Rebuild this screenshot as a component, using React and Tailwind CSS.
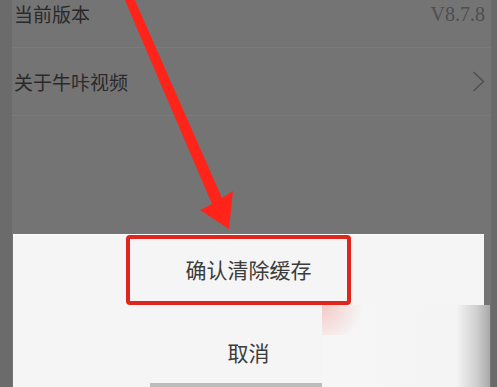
import React from "react";

const cjk = { fontFamily: '"Noto Sans CJK SC", "Noto Sans", sans-serif' };

function Chevron() {
  return (
    <svg width="13" height="21" viewBox="0 0 13 21" fill="none">
      <polyline points="1.5,1 11.5,10.5 1.5,20" stroke="#4c4c4c" strokeWidth="1.3" />
    </svg>
  );
}

function Arrow() {
  // red annotation arrow pointing down at the confirm button
  return (
    <svg
      className="absolute left-0 top-0 pointer-events-none"
      width="497"
      height="387"
      viewBox="0 0 497 387"
    >
      <polygon
        points="124,-2 134,-2 222,198 233,191 229,229 200,210 212,204"
        fill="#ff2419"
      />
    </svg>
  );
}

export default function App() {
  return (
    <div className="relative w-[497px] h-[387px] overflow-hidden bg-[#747474] flex" style={cjk}>
      <div className="w-[12px] bg-[#6b6b6b]" />

      <div className="w-[479px] flex flex-col">
        {/* settings rows, dimmed by the sheet overlay */}
        <div className="h-[48px] pt-[2px] pb-[22px] pl-[2px] pr-[6px] flex items-center justify-between border-b border-[#7b7b7b]">
          <span className="text-[19px] leading-none text-[#2a2a2a]">当前版本</span>
          <span
            className="text-[20px] leading-none text-[#4e4e4e]"
            style={{ fontFamily: '"Liberation Serif", "DejaVu Serif", serif' }}
          >
            V8.7.8
          </span>
        </div>
        <div className="h-[68px] pl-[2px] pr-[6px] flex items-center justify-between border-b border-[#7b7b7b]">
          <span className="text-[19px] leading-none text-[#2a2a2a]">关于牛咔视频</span>
          <Chevron />
        </div>

        <div className="flex-1" />

        {/* bottom sheet */}
        <div className="ml-[1px] mr-[7px] h-[153px] bg-[#f5f5f5] border-t border-[#fcfcfc] flex flex-col items-center">
          <div className="h-[69px] w-full flex items-center justify-center">
            <span className="text-[21px] leading-none text-[#3c3c3c]">确认清除缓存</span>
          </div>
          <div className="h-[79px] w-full flex justify-center pt-[38px]">
            <span className="text-[21px] leading-none text-[#3c3c3c]">取消</span>
          </div>
          <div className="w-[197px] h-[4px] bg-[#bcbcbc]" />
        </div>
      </div>

      <div className="w-[6px] bg-[#6a6a6a]" />

      {/* red highlight box */}
      <div className="absolute left-[126px] top-[235px] w-[225px] h-[70px] border-[4px] border-[#e0251c] rounded-[4px]" />

      <Arrow />

      {/* watermark patch */}
      <div className="absolute left-[322px] top-[305px] w-[168px] h-[82px] bg-[linear-gradient(90deg,#f6f6f6_0%,#f4f4f4_80%,#d0d0d0_92%,#a9a9a9_100%)]">
        <div className="absolute left-0 top-0 w-[50px] h-[30px] bg-[radial-gradient(circle_at_0%_0%,#f3c9c6_0%,rgba(246,246,246,0)_70%)]" />
      </div>
    </div>
  );
}
